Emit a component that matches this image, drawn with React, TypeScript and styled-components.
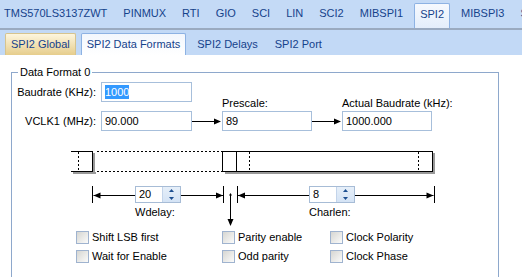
import React from 'react';
import styled, { createGlobalStyle } from 'styled-components';

const GlobalStyle = createGlobalStyle`
  html, body {
    margin: 0;
    padding: 0;
    background: #ffffff;
  }
  body {
    font-family: "Liberation Sans", Arial, sans-serif;
    font-size: 11px;
    color: #000;
    overflow: hidden;
  }
  #root {
    width: 522px;
    height: 277px;
    overflow: hidden;
  }
`;

const TopBar = styled.div`
  display: flex;
  align-items: flex-end;
  height: 30px;
  box-sizing: border-box;
  background: #c4daf6;
  border-bottom: 2px solid #9aaac0;
  padding-left: 0;
  white-space: nowrap;
`;

const TopTab = styled.div<{ $active?: boolean }>`
  height: ${(p) => (p.$active ? '25px' : '26px')};
  box-sizing: border-box;
  padding: 0 ${(p) => (p.$active ? '5px' : '8px')};
  margin: 0 ${(p) => (p.$active ? '3px' : '0')};
  line-height: ${(p) => (p.$active ? '20px' : '22px')};
  color: #15428b;
  font-size: 11px;
  border: ${(p) => (p.$active ? '1px solid #8db2e3' : 'none')};
  border-bottom: none;
  border-radius: 2px 2px 0 0;
  background: ${(p) => (p.$active ? 'linear-gradient(#f6f9fe, #e4eefb)' : 'transparent')};
  &:first-child {
    padding-left: 4px;
  }
`;

const SubBar = styled.div`
  display: flex;
  align-items: flex-end;
  gap: 5px;
  height: 25px;
  box-sizing: border-box;
  background: #c2d9f6;
  padding-left: 5px;
`;

const SubTab = styled.div<{ $kind?: 'active' | 'hot' }>`
  height: 22px;
  box-sizing: border-box;
  padding: 0 5px;
  line-height: 20px;
  color: #15428b;
  border: 1px solid
    ${(p) => (p.$kind === 'active' ? '#8db2e3' : p.$kind === 'hot' ? '#d6c48f' : 'transparent')};
  border-bottom: none;
  border-radius: 2px 2px 0 0;
  background: ${(p) =>
    p.$kind === 'active'
      ? 'linear-gradient(#f3f7fd, #ffffff)'
      : p.$kind === 'hot'
      ? 'linear-gradient(#fdf6de, #e6cd8c)'
      : 'transparent'};
`;

const Group = styled.fieldset`
  margin: 11px 0 0 11px;
  width: 488px;
  height: 230px;
  box-sizing: border-box;
  padding: 0;
  border: 1px solid #8ea8cc;
`;

const Legend = styled.legend`
  margin-left: 6px;
  padding: 0 2px;
  line-height: 13px;
`;

const RateGrid = styled.div`
  display: grid;
  grid-template-columns: 89px 91px 30px 90px 30px 90px;
  grid-template-rows: 14px 15px 20px;
  margin-top: 3px;
`;

const FieldLabel = styled.div<{ $row: string }>`
  grid-column: 1;
  grid-row: ${(p) => p.$row};
  align-self: start;
  height: 20px;
  line-height: 20px;
  text-align: right;
  padding-right: 5px;
  white-space: nowrap;
`;

const ColLabel = styled.div<{ $col: number }>`
  grid-column: ${(p) => p.$col};
  grid-row: 2;
  align-self: center;
  line-height: 13px;
  white-space: nowrap;
`;

const TextBox = styled.div<{ $col: number; $row: string }>`
  grid-column: ${(p) => p.$col};
  grid-row: ${(p) => p.$row};
  align-self: start;
  height: 20px;
  box-sizing: border-box;
  border: 1px solid #a7bfdb;
  background: #fff;
  padding-left: 3px;
  line-height: 18px;
`;

const Selected = styled.span`
  background: #3399ff;
  color: #fff;
  padding: 1px 0;
`;

const ArrowCell = styled.div<{ $col: number }>`
  grid-column: ${(p) => p.$col};
  grid-row: 3;
  display: flex;
  align-items: center;
`;

const Diagram = styled.svg`
  display: block;
  margin: 20px 0 0 59px;
`;

const DimRow = styled.div`
  display: flex;
  align-items: flex-start;
  margin: 11px 0 0 80px;
`;

const Segment = styled.div`
  display: flex;
  align-items: flex-start;
`;

const SpinColumn = styled.div`
  display: flex;
  flex-direction: column;
`;

const SpinBox = styled.div`
  display: flex;
  width: 46px;
  height: 17px;
  box-sizing: border-box;
  border: 1px solid #a7bcd6;
  background: #fff;
`;

const SpinText = styled.div`
  flex: 1;
  padding-left: 3px;
  line-height: 15px;
`;

const SpinButtons = styled.div`
  width: 17px;
  display: flex;
  flex-direction: column;
  align-items: center;
  justify-content: space-around;
  background: linear-gradient(#e6eff9, #d4e3f5);
  border-left: 1px solid #c3d4ea;
`;

const DimLabel = styled.div`
  margin-top: 3px;
  line-height: 13px;
`;

const ChecksGrid = styled.div`
  display: grid;
  grid-template-columns: 146px 108px auto;
  row-gap: 6px;
  margin: 5px 0 0 64px;
`;

const CheckItem = styled.label`
  display: flex;
  align-items: center;
  gap: 3px;
  height: 13px;
  line-height: 13px;
  white-space: nowrap;
`;

const CheckBox = styled.span`
  width: 13px;
  height: 13px;
  box-sizing: border-box;
  border: 1px solid #9fb3cf;
  background: linear-gradient(135deg, #d6d6d2, #fbfbfa);
  flex: none;
`;

function RightArrow() {
  return (
    <svg width={30} height={7}>
      <line x1={0} y1={3.5} x2={24} y2={3.5} stroke="#000" />
      <polygon points="29,3.5 22,0.5 22,6.5" fill="#000" />
    </svg>
  );
}

type DimProps = {
  width: number;
  barLeft?: boolean;
  barRight?: boolean;
  headLeft?: boolean;
  headRight?: boolean;
};

function DimLine({ width, barLeft, barRight, headLeft, headRight }: DimProps) {
  const y = 9.5;
  const l = barLeft ? 1.5 : 0;
  const r = barRight ? width - 1.5 : width;
  return (
    <svg width={width} height={17} style={{ display: 'block' }}>
      {barLeft && <line x1={0.5} y1={0} x2={0.5} y2={17} stroke="#000" />}
      {barRight && <line x1={width - 0.5} y1={0} x2={width - 0.5} y2={17} stroke="#000" />}
      <line x1={l} y1={y} x2={r} y2={y} stroke="#000" />
      {headLeft && <polygon points={`${l},${y} ${l + 7},${y - 3} ${l + 7},${y + 3}`} fill="#000" />}
      {headRight && <polygon points={`${r},${y} ${r - 7},${y - 3} ${r - 7},${y + 3}`} fill="#000" />}
    </svg>
  );
}

function CenterMark() {
  return (
    <svg width={15} height={40} style={{ display: 'block' }}>
      <line x1={0.5} y1={0} x2={0.5} y2={17} stroke="#000" />
      <line x1={14.5} y1={0} x2={14.5} y2={17} stroke="#000" />
      <line x1={7.5} y1={8} x2={7.5} y2={36} stroke="#000" />
      <polygon points="7.5,7 6,9.5 9,9.5" fill="#000" />
      <polygon points="7.5,40 4.5,33 10.5,33" fill="#000" />
    </svg>
  );
}

function Spin({ value, label }: { value: string; label: string }) {
  return (
    <SpinColumn>
      <SpinBox>
        <SpinText>{value}</SpinText>
        <SpinButtons>
          <svg width={5} height={3}>
            <polygon points="2.5,0 5,3 0,3" fill="#1d4f91" />
          </svg>
          <svg width={5} height={3}>
            <polygon points="0,0 5,0 2.5,3" fill="#1d4f91" />
          </svg>
        </SpinButtons>
      </SpinBox>
      <DimLabel>{label}</DimLabel>
    </SpinColumn>
  );
}

function FrameDiagram() {
  const dash = '2 2';
  return (
    <Diagram width={366} height={24}>
      {/* shadows */}
      <rect x={2} y={21} width={23} height={2} fill="#999" />
      <rect x={22} y={2} width={2} height={21} fill="#999" />
      <rect x={154} y={21} width={210} height={2} fill="#999" />
      <rect x={362} y={2} width={2} height={21} fill="#999" />
      {/* left partial frame */}
      <line x1={0} y1={0.5} x2={22} y2={0.5} stroke="#000" />
      <line x1={0} y1={20.5} x2={22} y2={20.5} stroke="#000" />
      <line x1={21.5} y1={0} x2={21.5} y2={21} stroke="#000" />
      <line x1={7.5} y1={1} x2={7.5} y2={20} stroke="#000" strokeDasharray={dash} />
      {/* gap */}
      <line x1={26} y1={0.5} x2={151} y2={0.5} stroke="#000" strokeDasharray={dash} />
      <line x1={26} y1={20.5} x2={151} y2={20.5} stroke="#000" strokeDasharray={dash} />
      {/* current frame */}
      <rect x={151.5} y={0.5} width={210} height={20} fill="none" stroke="#000" />
      <line x1={165.5} y1={0} x2={165.5} y2={21} stroke="#000" />
      <line x1={178.5} y1={1} x2={178.5} y2={20} stroke="#000" strokeDasharray={dash} />
      <line x1={347.5} y1={1} x2={347.5} y2={20} stroke="#000" strokeDasharray={dash} />
    </Diagram>
  );
}

const topTabs = ['TMS570LS3137ZWT', 'PINMUX', 'RTI', 'GIO', 'SCI', 'LIN', 'SCI2', 'MIBSPI1', 'SPI2', 'MIBSPI3', 'SPI3'];
const subTabs = ['SPI2 Global', 'SPI2 Data Formats', 'SPI2 Delays', 'SPI2 Port'];

const checks = [
  'Shift LSB first',
  'Parity enable',
  'Clock Polarity',
  'Wait for Enable',
  'Odd parity',
  'Clock Phase',
];

export default function App() {
  return (
    <>
      <GlobalStyle />
      <TopBar>
        {topTabs.map((t) => (
          <TopTab key={t} $active={t === 'SPI2'}>
            {t}
          </TopTab>
        ))}
      </TopBar>
      <SubBar>
        {subTabs.map((t, i) => (
          <SubTab key={t} $kind={i === 1 ? 'active' : i === 0 ? 'hot' : undefined}>
            {t}
          </SubTab>
        ))}
      </SubBar>
      <Group>
        <Legend>Data Format 0</Legend>
        <RateGrid>
          <FieldLabel $row="1 / span 2">Baudrate (KHz):</FieldLabel>
          <TextBox $col={2} $row="1 / span 2">
            <Selected>1000</Selected>
          </TextBox>
          <ColLabel $col={4}>Prescale:</ColLabel>
          <ColLabel $col={6}>Actual Baudrate (kHz):</ColLabel>
          <FieldLabel $row="3">VCLK1 (MHz):</FieldLabel>
          <TextBox $col={2} $row="3">90.000</TextBox>
          <ArrowCell $col={3}>
            <RightArrow />
          </ArrowCell>
          <TextBox $col={4} $row="3">89</TextBox>
          <ArrowCell $col={5}>
            <RightArrow />
          </ArrowCell>
          <TextBox $col={6} $row="3">1000.000</TextBox>
        </RateGrid>
        <FrameDiagram />
        <DimRow>
          <Segment>
            <DimLine width={43} barLeft headLeft />
            <Spin value="20" label="Wdelay:" />
            <DimLine width={42} headRight />
          </Segment>
          <CenterMark />
          <Segment>
            <DimLine width={71} headLeft />
            <Spin value="8" label="Charlen:" />
            <DimLine width={80} headRight barRight />
          </Segment>
        </DimRow>
        <ChecksGrid>
          {checks.map((c) => (
            <CheckItem key={c}>
              <CheckBox />
              {c}
            </CheckItem>
          ))}
        </ChecksGrid>
      </Group>
    </>
  );
}
